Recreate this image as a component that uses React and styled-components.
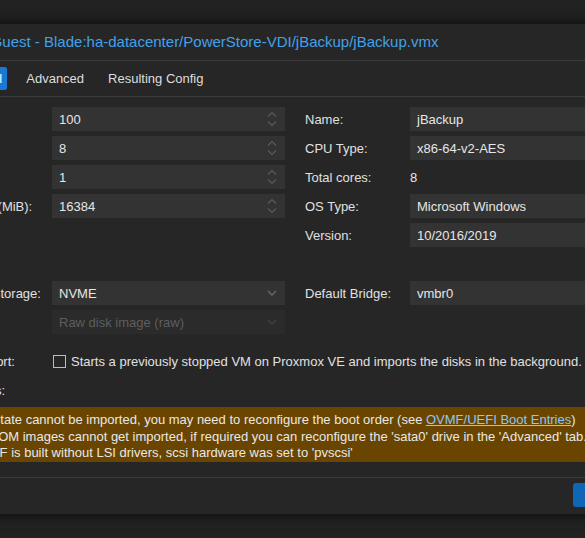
import React from "react";
import styled, { createGlobalStyle } from "styled-components";

const Global = createGlobalStyle`
  html, body { margin: 0; padding: 0; background: #222222; overflow: hidden; }
  body { font-family: "Liberation Sans", Arial, sans-serif; font-size: 13px; color: #e0e0e0; }
  * { box-sizing: border-box; }
`;

const Page = styled.div`
  width: 585px;
  height: 538px;
  padding-top: 24px;
  overflow: hidden;
`;

const Dialog = styled.div`
  width: 720px;
  margin-left: -65px;
  background: #262626;
  box-shadow: 0 0 10px 3px rgba(0, 0, 0, 0.5);
`;

const TitleBar = styled.div`
  height: 37px;
  line-height: 36px;
  padding-left: 9px;
  border-bottom: 1px solid #3b3b3b;
  color: #42a1e8;
  font-size: 15px;
  white-space: nowrap;
`;

const TabBar = styled.div`
  height: 36px;
  display: flex;
  align-items: center;
  padding-left: 16px;
  border-bottom: 1px solid #3b3b3b;
`;

const Tab = styled.div`
  height: 23px;
  line-height: 23px;
  padding: 0 5px;
  margin-right: 14px;
  border-radius: 2px;
  white-space: nowrap;
  color: ${(p) => (p.$active ? "#ffffff" : "#dedede")};
  background: ${(p) => (p.$active ? "#1a77d3" : "transparent")};
`;

const Body = styled.div`
  padding: 10px 12px 15px;
`;

const Columns = styled.div`
  display: grid;
  grid-template-columns: 338px 338px;
  column-gap: 20px;
  margin-top: ${(p) => p.$top || 0}px;
  align-items: start;
`;

const Column = styled.div`
  display: flex;
  flex-direction: column;
  gap: 5px;
`;

const Row = styled.div`
  display: flex;
  align-items: center;
  height: 24px;
  margin-top: ${(p) => p.$top || 0}px;
  white-space: nowrap;
`;

const Label = styled.div`
  width: 105px;
  flex: none;
  color: #e0e0e0;
`;

const Field = styled.div`
  width: 233px;
  height: 24px;
  display: flex;
  align-items: center;
  padding: 0 8px 0 7px;
  background: ${(p) => (p.$disabled ? "#2b2b2b" : "#333333")};
  color: ${(p) => (p.$disabled ? "#5e5e5e" : "#e6e6e6")};
`;

const Value = styled.div`
  flex: 1;
`;

const Display = styled.div`
  color: #e6e6e6;
`;

const CheckLine = styled.div`
  display: flex;
  align-items: center;
  gap: 5px;
  margin-left: 1px;
  color: #e0e0e0;
`;

const Box = styled.span`
  width: 13px;
  height: 13px;
  border: 1px solid #bcbcbc;
  flex: none;
`;

const Warning = styled.div`
  margin-top: 5px;
  height: 55px;
  padding: 5px 0 0 23px;
  background: #694500;
  color: #e8e8e8;
  line-height: 16.5px;
  white-space: nowrap;
`;

const Link = styled.a`
  color: #8ec7f5;
  text-decoration: underline;
`;

const Footer = styled.div`
  height: 37px;
  border-top: 1px solid #3b3b3b;
  display: flex;
  justify-content: flex-end;
  padding: 5px 12px 0 0;
`;

const Button = styled.div`
  width: 70px;
  height: 24px;
  line-height: 24px;
  text-align: center;
  border-radius: 3px;
  background: #0f66b7;
  color: #ffffff;
`;

const Spinner = () => (
  <svg width="10" height="16" viewBox="0 0 10 16" fill="none" stroke="#5a5a5a" strokeWidth="1.2">
    <path d="M1 5.5 L5 1.5 L9 5.5" />
    <path d="M1 10.5 L5 14.5 L9 10.5" />
  </svg>
);

const Chevron = ({ color = "#6a6a6a" }) => (
  <svg width="10" height="6" viewBox="0 0 10 6" fill="none" stroke={color} strokeWidth="1.3">
    <path d="M1 1 L5 5 L9 1" />
  </svg>
);

const NumField = ({ value }) => (
  <Field>
    <Value>{value}</Value>
    <Spinner />
  </Field>
);

const ComboField = ({ value, disabled }) => (
  <Field $disabled={disabled}>
    <Value>{value}</Value>
    <Chevron color={disabled ? "#424242" : "#6a6a6a"} />
  </Field>
);

export default function App() {
  return (
    <Page>
      <Global />
      <Dialog>
        <TitleBar>Import Guest - Blade:ha-datacenter/PowerStore-VDI/jBackup/jBackup.vmx</TitleBar>
        <TabBar>
          <Tab $active>General</Tab>
          <Tab>Advanced</Tab>
          <Tab>Resulting Config</Tab>
        </TabBar>
        <Body>
          <Columns>
            <Column>
              <Row><Label>VM ID:</Label><NumField value="100" /></Row>
              <Row><Label>Sockets:</Label><NumField value="8" /></Row>
              <Row><Label>Cores:</Label><NumField value="1" /></Row>
              <Row><Label>Memory (MiB):</Label><NumField value="16384" /></Row>
            </Column>
            <Column>
              <Row><Label>Name:</Label><Field><Value>jBackup</Value></Field></Row>
              <Row><Label>CPU Type:</Label><ComboField value="x86-64-v2-AES" /></Row>
              <Row><Label>Total cores:</Label><Display>8</Display></Row>
              <Row><Label>OS Type:</Label><ComboField value="Microsoft Windows" /></Row>
              <Row><Label>Version:</Label><ComboField value="10/2016/2019" /></Row>
            </Column>
          </Columns>
          <Columns $top={34}>
            <Column>
              <Row><Label>Default Storage:</Label><ComboField value="NVME" /></Row>
              <Row><Label>Format:</Label><ComboField value="Raw disk image (raw)" disabled /></Row>
            </Column>
            <Column>
              <Row><Label>Default Bridge:</Label><ComboField value="vmbr0" /></Row>
            </Column>
          </Columns>
          <Row $top={15}>
            <Label>Live Import:</Label>
            <CheckLine>
              <Box />
              Starts a previously stopped VM on Proxmox VE and imports the disks in the background.
            </CheckLine>
          </Row>
          <Row $top={5}><Label>Warnings:</Label></Row>
          <Warning>
            <div>
              EFI state cannot be imported, you may need to reconfigure the boot order (see{" "}
              <Link>OVMF/UEFI Boot Entries</Link>)
            </div>
            <div>CDROM images cannot get imported, if required you can reconfigure the 'sata0' drive in the 'Advanced' tab.</div>
            <div>OVMF is built without LSI drivers, scsi hardware was set to 'pvscsi'</div>
          </Warning>
        </Body>
        <Footer>
          <Button>Import</Button>
        </Footer>
      </Dialog>
    </Page>
  );
}
